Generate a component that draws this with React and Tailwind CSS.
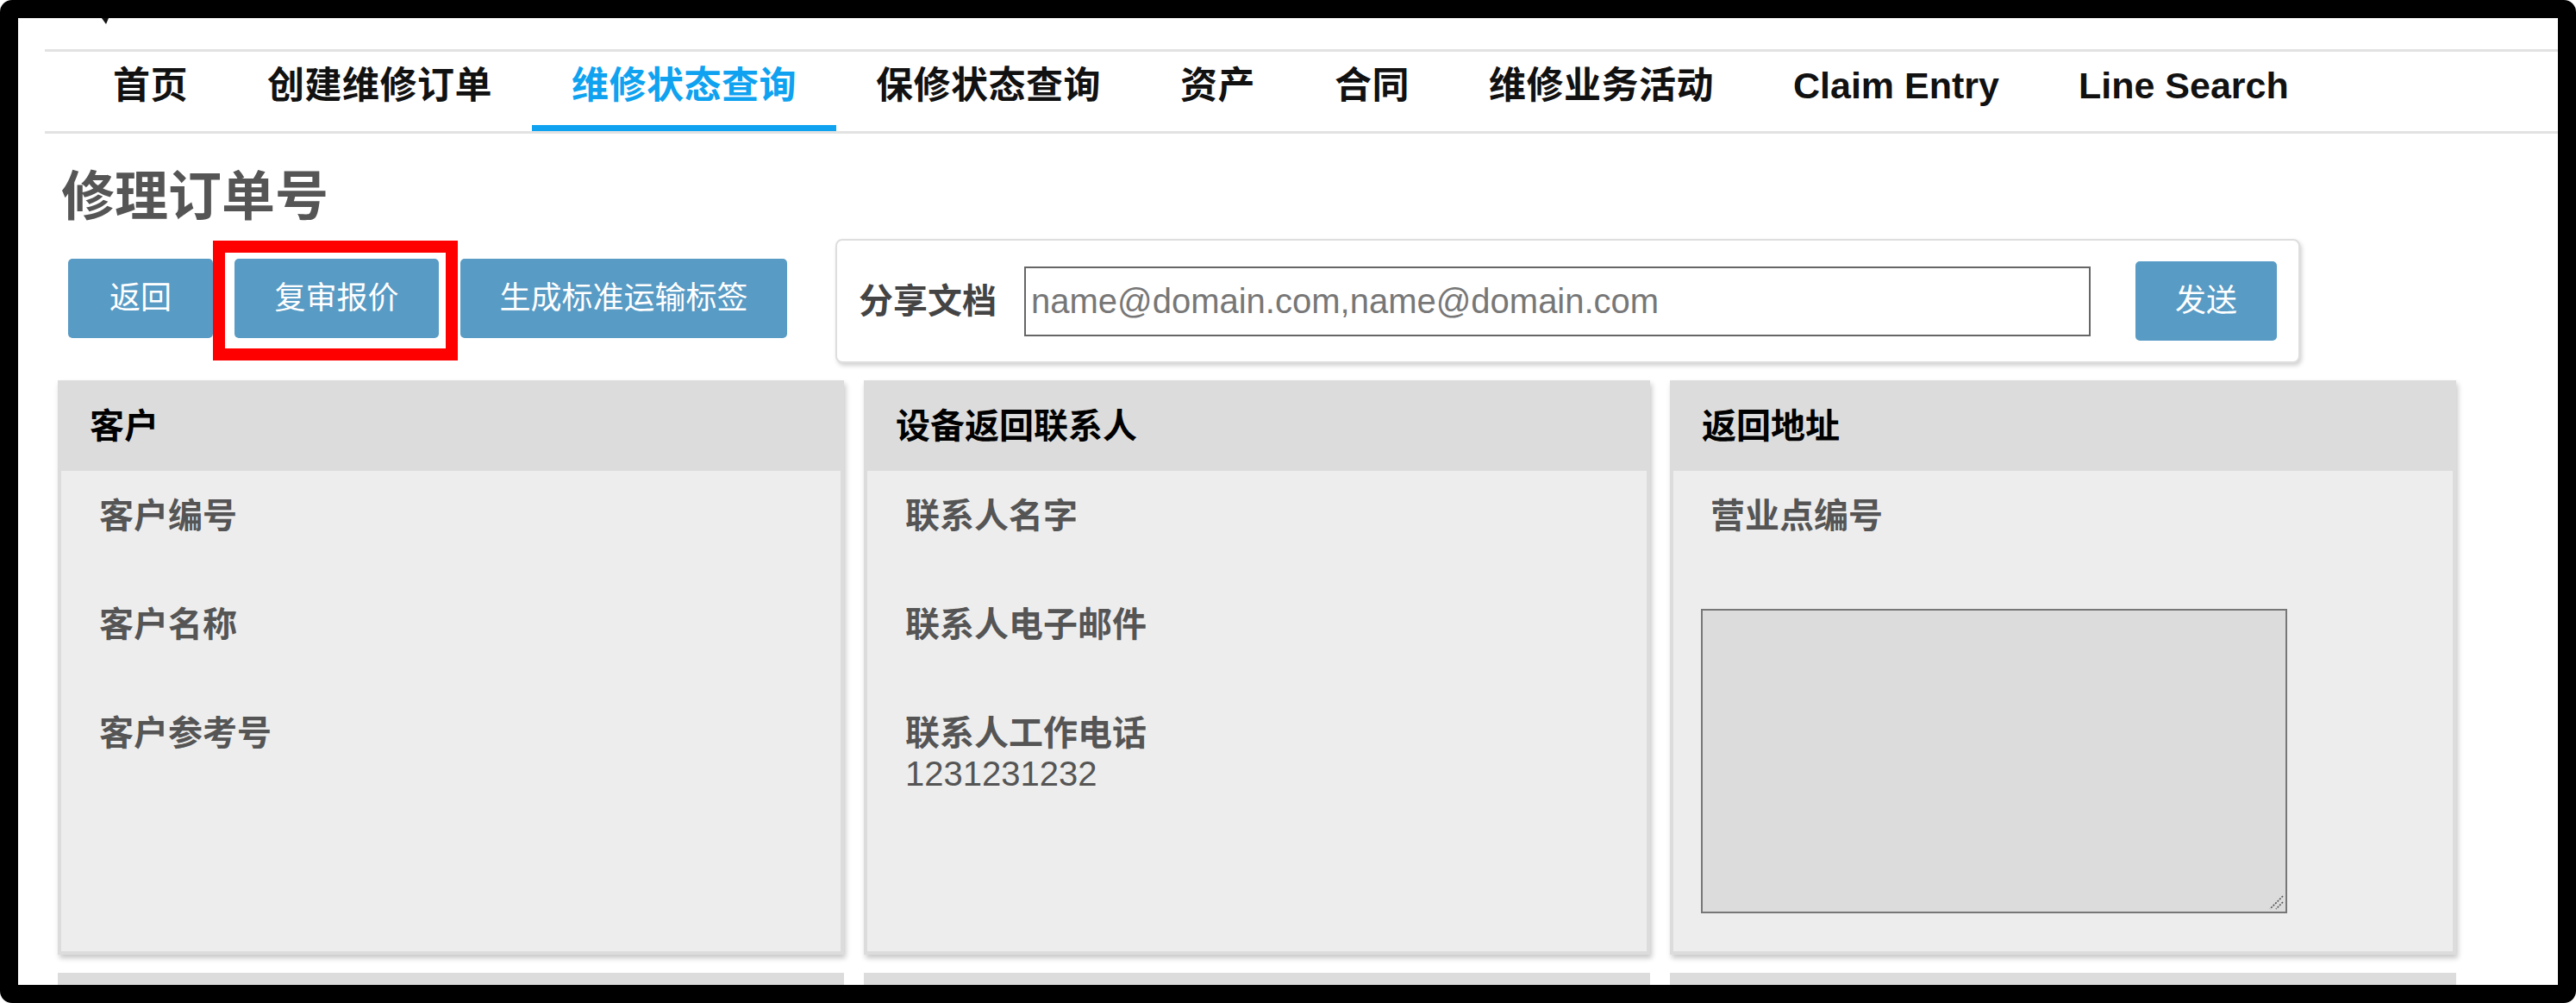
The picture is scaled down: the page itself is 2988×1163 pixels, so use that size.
import React from 'react';

const tabs = ['首页', '创建维修订单', '维修状态查询', '保修状态查询', '资产', '合同', '维修业务活动', 'Claim Entry', 'Line Search'];

const Field = ({ label, value }) => (
  <div className="h-[126px]">
    <div className="text-[40px] leading-[40px] font-bold text-[#555]">{label}</div>
    {value && <div className="text-[40px] leading-[54px] text-[#555]">{value}</div>}
  </div>
);

const Card = ({ title, children }) => (
  <div className="w-[912px] h-[666px] bg-[#dcdcdc] flex flex-col shadow-[2px_4px_6px_rgba(0,0,0,0.22)]">
    <div className="h-[105px] shrink-0 flex items-center pl-[37px] text-[40px] font-bold text-black">{title}</div>
    <div className="flex-1 mx-[4px] mb-[4px] bg-[#ededed] pt-[32px] pl-[44px]">{children}</div>
  </div>
);

export default function App() {
  return (
    <div className="w-[2988px] h-[1163px] bg-white [font-family:'Liberation_Sans','Noto_Sans_CJK_SC',sans-serif]">
      <div className="relative w-full h-full border-[21px] border-black rounded-[14px] overflow-hidden bg-white">
        {/* restes de la barre du haut */}
        <svg className="absolute left-[97px] top-0" width="8" height="7" viewBox="0 0 8 7">
          <path d="M0 0 L8 0 L5 7 Z" fill="#111" />
        </svg>

        {/* Navigation */}
        <div className="mt-[36px] ml-[31px] h-[98px] border-t-[3px] border-b-[3px] border-[#e2e2e2] flex">
          {tabs.map((t, i) => {
            const active = i === 2;
            const latin = /^[A-Za-z ]+$/.test(t);
            return (
              <div
                key={t}
                className={`relative h-full px-[46px] pt-[18px] text-[43px] leading-none font-bold whitespace-nowrap ${latin ? '' : 'tracking-[0.5px]'} ${i === 0 ? 'ml-[33px]' : ''} ${active ? 'text-[#0ea2f0]' : 'text-[#111]'}`}
              >
                {t}
                {active && <div className="absolute left-0 right-0 bottom-0 h-[7px] bg-[#0ea2f0]" />}
              </div>
            );
          })}
        </div>

        {/* Titre */}
        <h1 className="mt-[43px] ml-[50px] text-[62px] leading-none font-bold text-[#555]">修理订单号</h1>

        {/* Boutons + partage */}
        <div className="mt-[17px] ml-[58px] flex items-start">
          <button className="mt-[23px] w-[168px] h-[92px] bg-[#589bc5] rounded-[5px] text-white text-[36px]">返回</button>
          <div className="relative mt-[23px] ml-[25px]">
            <button className="w-[237px] h-[92px] bg-[#589bc5] rounded-[5px] text-white text-[36px]">复审报价</button>
            <div className="absolute left-[-25px] top-[-21px] right-[-22px] bottom-[-26px] border-[14px] border-[#ff0000]" />
          </div>
          <button className="mt-[23px] ml-[25px] w-[379px] h-[92px] bg-[#589bc5] rounded-[5px] text-white text-[36px]">生成标准运输标签</button>

          <div className="ml-[56px] w-[1699px] h-[144px] border-2 border-[#dedede] rounded-[8px] bg-white shadow-[2px_3px_5px_rgba(0,0,0,0.18)] flex items-center pl-[25px]">
            <span className="text-[40px] font-bold text-[#444] whitespace-nowrap">分享文档</span>
            <input
              type="text"
              placeholder="name@domain.com,name@domain.com"
              className="ml-[32px] w-[1237px] h-[81px] border-2 border-[#666] bg-white pl-[6px] text-[40px] placeholder:text-[#777] outline-none"
            />
            <button className="ml-[52px] w-[164px] h-[92px] bg-[#589bc5] rounded-[5px] text-white text-[36px]">发送</button>
          </div>
        </div>

        {/* Cartes */}
        <div className="mt-[20px] ml-[46px] flex gap-[23px]">
          <Card title="客户">
            <Field label="客户编号" />
            <Field label="客户名称" />
            <Field label="客户参考号" />
          </Card>
          <Card title="设备返回联系人">
            <Field label="联系人名字" />
            <Field label="联系人电子邮件" />
            <Field label="联系人工作电话" value="1231231232" />
          </Card>
          <Card title="返回地址">
            <div className="-ml-[12px]">
              <div className="ml-[11px] text-[40px] leading-[40px] font-bold text-[#555]">营业点编号</div>
              <div className="relative mt-[88px] w-[680px] h-[353px]">
                <textarea className="block w-full h-full resize-none bg-[#dcdcdc] border-2 border-[#777]" />
                <svg className="absolute right-[4px] bottom-[4px]" width="18" height="18" viewBox="0 0 18 18">
                  <path d="M17 2 L2 17 M17 9 L9 17" stroke="#555" strokeWidth="1.6" strokeDasharray="2 1.5" />
                </svg>
              </div>
            </div>
          </Card>
        </div>

        <div className="mt-[21px] ml-[46px] flex gap-[23px]">
          <div className="w-[912px] h-[100px] bg-[#dcdcdc]" />
          <div className="w-[912px] h-[100px] bg-[#dcdcdc]" />
          <div className="w-[912px] h-[100px] bg-[#dcdcdc]" />
        </div>
      </div>
    </div>
  );
}
